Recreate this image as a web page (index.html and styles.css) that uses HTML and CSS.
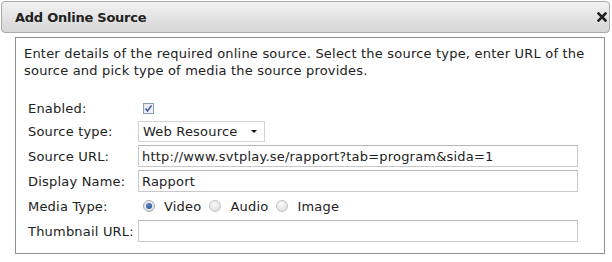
FILE: index.html
```html
<!DOCTYPE html>
<html>
<head>
<meta charset="utf-8">
<title>Add Online Source</title>
<link rel="stylesheet" href="styles.css">
</head>
<body>
<div class="dialog">
  <div class="titlebar">
    <span class="title">Add Online Source</span>
    <svg class="close" width="10" height="10" viewBox="0 0 10 10"><path d="M1.5 1.5 L8.5 8.5 M8.5 1.5 L1.5 8.5" stroke="#222" stroke-width="2.6" stroke-linecap="square"/></svg>
  </div>
  <div class="content">
    <p class="intro">Enter details of the required online source. Select the source type, enter URL of the source and pick type of media the source provides.</p>
    <div class="form">
      <span class="label">Enabled:</span>
      <span class="field"><span class="checkbox"><svg width="9" height="9" viewBox="0 0 9 9"><path d="M1.5 4.5 L3.5 7 L7.5 1.5" fill="none" stroke="#3d5fa8" stroke-width="1.6"/></svg></span></span>

      <span class="label">Source type:</span>
      <span class="field"><span class="select">Web Resource<span class="arrow"></span></span></span>

      <span class="label">Source URL:</span>
      <span class="field"><input class="text" type="text" value="http://www.svtplay.se/rapport?tab=program&amp;sida=1"></span>

      <span class="label">Display Name:</span>
      <span class="field"><input class="text" type="text" value="Rapport"></span>

      <span class="label">Media Type:</span>
      <span class="field radios">
        <span class="radio on"></span><span class="rlabel">Video</span>
        <span class="radio"></span><span class="rlabel">Audio</span>
        <span class="radio"></span><span class="rlabel">Image</span>
      </span>

      <span class="label">Thumbnail URL:</span>
      <span class="field"><input class="text" type="text" value=""></span>
    </div>
  </div>
</div>
</body>
</html>
```
FILE: styles.css
```css
html, body {
  margin: 0;
  padding: 0;
  background: #fff;
}
body {
  font-family: "DejaVu Sans", Verdana, sans-serif;
  font-size: 13px;
  letter-spacing: 0.2px;
  color: #222;
}
.dialog {
  width: 612px;
  height: 262px;
  padding-top: 1px;
  box-sizing: border-box;
}
.titlebar {
  margin: 0 2px 0 1px;
  height: 30px;
  border: 1px solid #a9a9a9;
  border-radius: 4px;
  background: linear-gradient(#f2f2f2, #d6d6d6);
  display: flex;
  align-items: center;
  justify-content: space-between;
  padding: 0 2px 0 13px;
}
.title {
  font-weight: bold;
  font-size: 13px;
  letter-spacing: -0.25px;
  color: #222;
  padding-top: 1px;
}
.close {
  display: block;
}
.content {
  margin: 4px 7px 0 15px;
  border: 1px solid #8f8f8f;
  height: 217px;
  box-sizing: border-box;
  padding: 7px 8px 0 8px;
}
.intro {
  margin: 0;
  line-height: 17px;
  color: #222;
}
.form {
  margin: 20px 0 0 4px;
  display: grid;
  grid-template-columns: 110px 440px;
  grid-template-rows: 18px 22px 22px 22px 22px 22px;
  row-gap: 3px;
  align-items: center;
}
.label {
  color: #222;
}
.field {
  display: flex;
  align-items: center;
}
.checkbox {
  width: 11px;
  height: 11px;
  margin-left: 5px;
  border: 1px solid #8c9bb5;
  box-sizing: border-box;
  background: linear-gradient(135deg, #e4e8ee, #f6f7f9);
  display: flex;
  align-items: center;
  justify-content: center;
}
.checkbox svg {
  display: block;
}
.select {
  width: 127px;
  height: 21px;
  box-sizing: border-box;
  border: 1px solid #d3d3d3;
  background: #fff;
  padding-left: 4px;
  display: flex;
  align-items: center;
  position: relative;
}
.arrow {
  position: absolute;
  right: 7px;
  top: 8px;
  width: 0;
  height: 0;
  border-left: 3px solid transparent;
  border-right: 3px solid transparent;
  border-top: 3px solid #111;
}
.text {
  width: 440px;
  height: 22px;
  box-sizing: border-box;
  border: 1px solid #c9c9c9;
  border-top-color: #b5b5b5;
  padding: 0 3px;
  margin: 0;
  font-family: "DejaVu Sans", Verdana, sans-serif;
  font-size: 13px;
  letter-spacing: 0.2px;
  color: #222;
  background: #fff;
  outline: none;
}
.radio {
  flex: none;
  width: 12px;
  height: 12px;
  margin-left: 5px;
  border-radius: 50%;
  box-sizing: border-box;
  border: 1px solid #c2c2c2;
  background: radial-gradient(circle at 40% 35%, #fafafa, #d9d9d9);
  position: relative;
}
.radio.on {
  border-color: #a2a9b5;
}
.radio.on::after {
  content: "";
  position: absolute;
  left: 2px;
  top: 2px;
  width: 6px;
  height: 6px;
  border-radius: 50%;
  background: radial-gradient(circle at 40% 35%, #5b86c8, #1f4a8a);
}
.rlabel {
  margin-left: 9px;
  margin-right: 3px;
}
```
